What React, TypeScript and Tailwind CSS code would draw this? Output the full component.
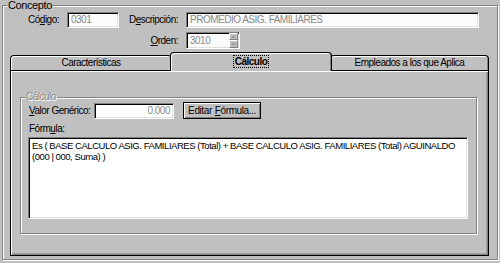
import React from "react";

const sunken =
  "bg-[#fbfbfb] border border-t-[#808080] border-l-[#808080] border-r-[#ffffff] border-b-[#ffffff] shadow-[inset_1px_1px_0_#000,inset_-1px_-1px_0_#dfdfdf]";

function U({ children }: { children: React.ReactNode }) {
  return <span className="underline underline-offset-[1px]">{children}</span>;
}

export default function App() {
  return (
    <div className="w-[500px] h-[263px] bg-[#c0c0c0] pt-[5px] pl-[2px] font-['Liberation_Sans',Arial,sans-serif] text-[10px] tracking-[-0.5px] leading-[12px] text-black overflow-hidden whitespace-nowrap">
      {/* Concepto group */}
      <div className="relative w-[496px] h-[255px] border border-[#808080] shadow-[inset_1px_1px_0_#fff,1px_1px_0_#fff]">
        <span className="absolute left-[4px] top-[-7px] bg-[#c0c0c0] px-[1px] text-[11px] tracking-[-0.4px]">Concepto</span>
        <div className="pt-[6px]">
          {/* row 1 */}
          <div className="flex items-center h-[16px]">
            <div className="w-[56px] text-right">
              Có<U>d</U>igo:
            </div>
            <div className={`ml-[8px] w-[52px] h-[16px] ${sunken} text-[#8a8a8a] pl-[3px] flex items-center`}>0301</div>
            <div className="w-[59px] text-right">
              D<U>e</U>scripción:
            </div>
            <div className={`ml-[8px] w-[293px] h-[16px] ${sunken} text-[#8a8a8a] pl-[3px] flex items-center`}>
              PROMEDIO ASIG. FAMILIARES
            </div>
          </div>
          {/* row 2 */}
          <div className="flex items-center h-[17px] mt-[4px]">
            <div className="w-[175px] text-right">
              <U>O</U>rden:
            </div>
            <div className={`ml-[8px] w-[54px] h-[17px] ${sunken} text-[#8a8a8a] pl-[3px] flex items-center justify-between`}>
              <span>3010</span>
              <div className="flex flex-col h-[15px] w-[9px] mr-[1px]">
                <div className="h-[7px] bg-[#c0c0c0] border border-t-white border-l-white border-r-[#808080] border-b-[#808080] flex items-center justify-center">
                  <svg width="5" height="3" viewBox="0 0 5 3"><path d="M2.5 0L5 3H0z" fill="#9a9a9a" /></svg>
                </div>
                <div className="h-[8px] bg-[#c0c0c0] border border-t-white border-l-white border-r-[#808080] border-b-[#808080] flex items-center justify-center">
                  <svg width="5" height="3" viewBox="0 0 5 3"><path d="M0 0h5L2.5 3z" fill="#9a9a9a" /></svg>
                </div>
              </div>
            </div>
          </div>

          {/* tabs */}
          <div className="ml-[7px] mt-[3px] flex items-end h-[18px]">
            <div className="w-[162px] h-[15px] border border-b-0 border-black rounded-t-[4px] shadow-[inset_1px_1px_0_#fff,inset_-1px_0_0_#808080] flex items-center justify-center">
              Características
            </div>
            <div className="relative z-10 -ml-[2px] w-[162px] h-[19px] mb-[-1px] bg-[#c0c0c0] border border-b-0 border-black rounded-t-[4px] shadow-[inset_1px_1px_0_#fff,inset_-1px_0_0_#808080] flex items-start justify-center pt-[3px]">
              <span className="font-bold outline-1 outline-dotted outline-black px-[1px] leading-[11px]">Cálculo</span>
            </div>
            <div className="-ml-[2px] w-[159px] h-[15px] border border-b-0 border-black rounded-t-[4px] shadow-[inset_1px_1px_0_#fff,inset_-1px_0_0_#808080] flex items-center justify-center">
              Empleados a los que Aplica
            </div>
          </div>

          {/* panel */}
          <div className="ml-[7px] w-[479px] h-[186px] border border-black shadow-[inset_1px_1px_0_#fff,inset_-1px_-1px_0_#808080,inset_-2px_-2px_0_#a0a0a0] pt-[26px] pl-[9px]">
            {/* Cálculo group */}
            <div className="relative w-[457px] h-[137px] border border-[#808080] shadow-[inset_1px_1px_0_#fff,1px_1px_0_#fff]">
              <span className="absolute left-[4px] top-[-7px] bg-[#c0c0c0] px-[1px] text-[#8a8a8a] [text-shadow:1px_1px_0_#fff]">
                Cálculo
              </span>
              <div className="pt-[4px]">
                <div className="flex items-center h-[17px]">
                  <div className="ml-[8px] w-[65px]">
                    <U>V</U>alor Genérico:
                  </div>
                  <div className={`w-[80px] h-[16px] ${sunken} bg-white text-[#8a8a8a] pr-[3px] flex items-center justify-end`}>0.000</div>
                  <div className="ml-[9px] w-[78px] h-[17px] border border-black shadow-[inset_1px_1px_0_#fff,inset_-1px_-1px_0_#808080] flex items-center justify-center tracking-[-0.4px] gap-[3px]">
                    <span>Editar</span>
                    <span>
                      <U>F</U>órmula...
                    </span>
                  </div>
                </div>
                <div className="ml-[8px] mt-[4px] h-[12px] leading-[12px]">
                  Fórm<U>u</U>la:
                </div>
                <div className={`ml-[7px] mt-[2px] w-[440px] h-[82px] ${sunken} bg-white pl-[3px] pt-[2px] text-[9.5px] leading-[11px] tracking-[-0.45px]`}>
                  <div>Es ( BASE CALCULO ASIG. FAMILIARES (Total) + BASE CALCULO ASIG. FAMILIARES (Total) AGUINALDO</div>
                  <div>(000 | 000, Suma) )</div>
                </div>
              </div>
            </div>
          </div>
        </div>
      </div>
    </div>
  );
}
